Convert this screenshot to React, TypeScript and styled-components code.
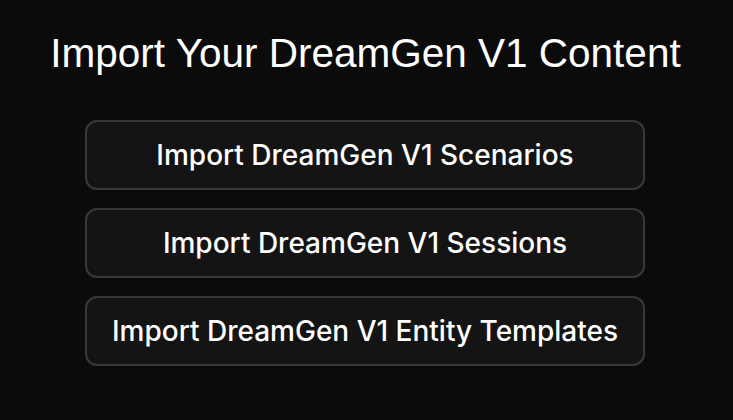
import styled, { createGlobalStyle } from "styled-components";

const Global = createGlobalStyle`
    html, body {
        margin: 0;
        padding: 0;
        background: #0b0b0b;
    }
`;

const Page = styled.main`
    width: 733px;
    height: 420px;
    display: flex;
    flex-direction: column;
    align-items: center;
    background: #0b0b0b;
    color: #ffffff;
`;

const Title = styled.h1`
    margin: 29px 2px 0 0;
    font-family: "Liberation Sans", Arial, sans-serif;
    font-weight: 400;
    font-size: 40.5px;
    line-height: 48px;
    letter-spacing: 0;
`;

const List = styled.div`
    margin: 43px 3px 0 0;
    display: flex;
    flex-direction: column;
    gap: 18px;
`;

const ImportButton = styled.button`
    width: 560px;
    height: 70px;
    box-sizing: border-box;
    border: 2px solid #383838;
    border-radius: 12px;
    background: #141414;
    color: #ffffff;
    font-family: Inter, "Noto Sans", sans-serif;
    font-weight: 500;
    font-size: 28px;
    cursor: pointer;
`;

const items = ["Scenarios", "Sessions", "Entity Templates"];

export default function App() {
    return (
        <Page>
            <Global />
            <Title>Import Your DreamGen V1 Content</Title>
            <List>
                {items.map((item) => (
                    <ImportButton key={item}>Import DreamGen V1 {item}</ImportButton>
                ))}
            </List>
        </Page>
    );
}
